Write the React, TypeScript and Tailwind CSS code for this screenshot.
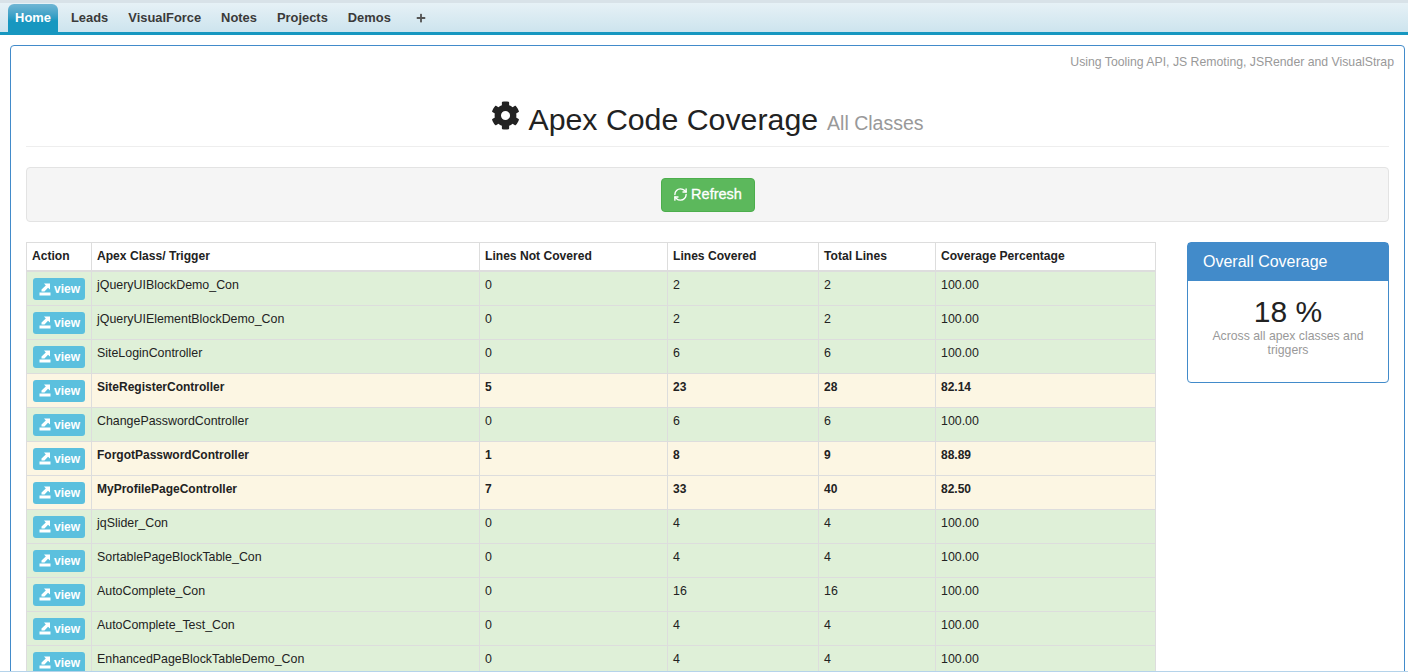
import React from 'react';
import { FaCog, FaPlus } from 'react-icons/fa';
import { RefreshCw } from 'lucide-react';

const tabs = ['Leads', 'VisualForce', 'Notes', 'Projects', 'Demos'];

const rows = [
  ['jQueryUIBlockDemo_Con', '0', '2', '2', '100.00'],
  ['jQueryUIElementBlockDemo_Con', '0', '2', '2', '100.00'],
  ['SiteLoginController', '0', '6', '6', '100.00'],
  ['SiteRegisterController', '5', '23', '28', '82.14'],
  ['ChangePasswordController', '0', '6', '6', '100.00'],
  ['ForgotPasswordController', '1', '8', '9', '88.89'],
  ['MyProfilePageController', '7', '33', '40', '82.50'],
  ['jqSlider_Con', '0', '4', '4', '100.00'],
  ['SortablePageBlockTable_Con', '0', '4', '4', '100.00'],
  ['AutoComplete_Con', '0', '16', '16', '100.00'],
  ['AutoComplete_Test_Con', '0', '4', '4', '100.00'],
  ['EnhancedPageBlockTableDemo_Con', '0', '4', '4', '100.00'],
];

const ExportIcon = () => (
  <svg width="12" height="13" viewBox="0 0 12 13" fill="white" className="shrink-0">
    <rect x="0.5" y="9.5" width="11" height="3" />
    <path d="M5 0.5 H11 V6.5 L9 4.8 L5.5 8.5 H2.5 V6.5 L6.8 2.4 Z" />
  </svg>
);

const Th = ({ children, w }: { children: React.ReactNode; w: string }) => (
  <th className={`${w} border border-[#ddd] border-b-2 px-[5px] pt-[4px] pb-[5px] h-[27px] text-left text-[12.1px] font-bold text-[#222] align-top`}>
    {children}
  </th>
);

export default function App() {
  return (
    <div className="h-screen overflow-hidden bg-white relative font-['Liberation_Sans',Arial,sans-serif] text-[#222]">
      <div className="h-[35px] border-t-[3px] border-t-[#d8e2e8] border-b-[3px] border-b-[#1797c0] bg-gradient-to-b from-[#e6f1f6] to-[#cde4ee] flex items-end pl-2 text-[12.9px] font-bold text-[#3a3a3a]">
        <div className="w-[50px] h-7 mr-[3px] rounded-t-md bg-gradient-to-b from-[#6fb6d4] to-[#1797c0] to-60% text-white text-center leading-[28px]">
          Home
        </div>
        {tabs.map((t) => (
          <div key={t} className="px-[10px] h-7 leading-[28px]">{t}</div>
        ))}
        <div className="pl-[15px] h-7 flex items-center">
          <FaPlus size={10} className="text-[#555]" />
        </div>
      </div>

      <div className="mt-[10px] ml-[10px] mr-[3px] border border-[#428bca] rounded px-[15px] pb-5">
        <p className="text-right text-[12.25px] text-[#999] pt-[9px] mr-[-5px] leading-[14px]">
          Using Tooling API, JS Remoting, JSRender and VisualStrap
        </p>
        <div className="mt-[19px] pb-[2px] border-b border-[#eee] flex items-end justify-center h-[59px]">
          <h1 className="text-[30.3px] leading-[42px] font-normal text-[#222] flex items-baseline">
            <FaCog className="text-[29px] mr-[8px] self-start mt-[2px]" />
            Apex Code Coverage
            <small className="text-[19.5px] text-[#999] ml-[9px]">All Classes</small>
          </h1>
        </div>
        <div className="mt-5 h-[55px] bg-[#f5f5f5] border border-[#e3e3e3] rounded flex items-center justify-center">
          <button className="w-[94px] h-[34px] bg-[#5cb85c] border border-[#4cae4c] rounded text-white text-[14.5px] [-webkit-text-stroke:0.3px_white] flex items-center justify-center gap-[3px]">
            <RefreshCw size={15} strokeWidth={2.25} />
            Refresh
          </button>
        </div>
        <div className="mt-5 flex items-start">
          <table className="w-[1129px] table-fixed border-collapse">
            <thead>
              <tr>
                <Th w="w-[65px]">Action</Th>
                <Th w="w-[388px]">Apex Class/ Trigger</Th>
                <Th w="w-[188px]">Lines Not Covered</Th>
                <Th w="w-[151px]">Lines Covered</Th>
                <Th w="w-[117px]">Total Lines</Th>
                <Th w="w-[220px]">Coverage Percentage</Th>
              </tr>
            </thead>
            <tbody>
              {rows.map((r) => {
                const warn = parseFloat(r[4]) < 100;
                return (
                  <tr key={r[0]} className={warn ? 'bg-[#fcf6e3] font-bold text-xs' : 'bg-[#dff0d8] text-[12.4px]'}>
                    <td className="border border-[#ddd] pl-[6px] pr-1 h-[34px] pt-[6px] pb-[4px] align-top">
                      <a className="w-[52px] h-[22px] bg-[#5bc0de] rounded-[3px] text-white text-xs font-bold flex items-center pl-[6px] gap-[3px]">
                        <ExportIcon />
                        view
                      </a>
                    </td>
                    {r.map((c, i) => (
                      <td key={i} className="border border-[#ddd] px-[5px] pt-[5px] align-top leading-[17px]">
                        {c}
                      </td>
                    ))}
                  </tr>
                );
              })}
            </tbody>
          </table>
          <div className="ml-[31px] w-[202px] h-[141px] border border-[#428bca] rounded">
            <div className="h-[38px] bg-[#428bca] text-white text-base px-[15px] flex items-center">Overall Coverage</div>
            <div className="text-center px-[10px] pt-[14px]">
              <div className="text-[30px] leading-[33px] text-[#222]">18 %</div>
              <div className="text-[12.25px] mt-[1px] leading-[14px] text-[#999]">Across all apex classes and triggers</div>
            </div>
          </div>
        </div>
      </div>
      <div className="absolute left-0 right-0 bottom-0 h-px bg-[#b5d3ea]" />
    </div>
  );
}
